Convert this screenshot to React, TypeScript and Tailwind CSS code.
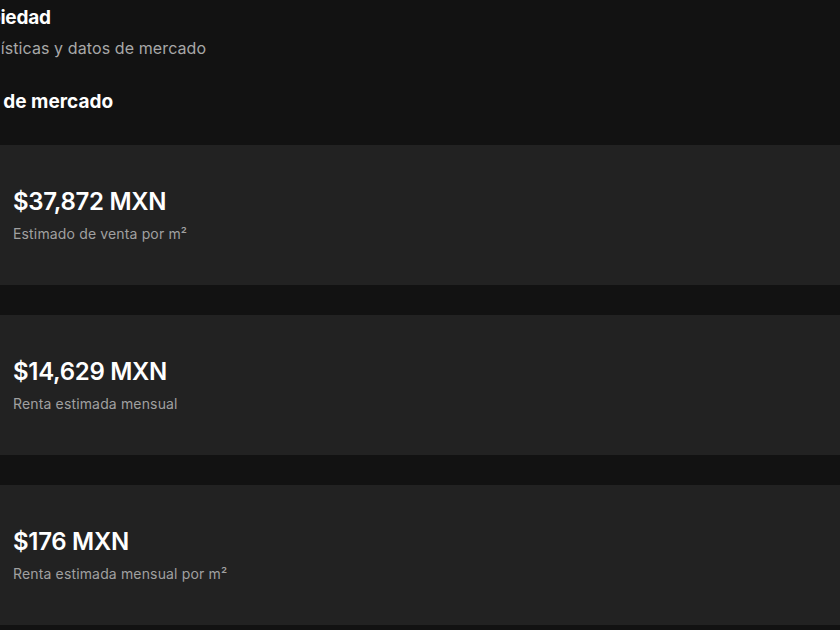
const stats = [
  { value: "$37,872 MXN", label: "Estimado de venta por m²" },
  { value: "$14,629 MXN", label: "Renta estimada mensual" },
  { value: "$176 MXN", label: "Renta estimada mensual por m²" },
];

export default function App() {
  return (
    <div className="min-h-screen bg-[#121212] overflow-hidden text-white font-['Inter',sans-serif]">
      {/* Section header (left side is cut off by the viewport) */}
      <div className="pt-[5px]">
        <h2 className="-ml-[42px] text-[19px] font-bold leading-[26px] tracking-[-0.2px]">Propiedad</h2>
        <p className="-ml-[42px] mt-[6px] text-[16px] leading-[22px] text-[#a8a8a8] tracking-[0.1px]">
          Estadísticas y datos de mercado
        </p>
        <h3 className="-ml-[55px] mt-[30px] text-[19px] font-bold leading-[26px] tracking-[0px]">Datos de mercado</h3>
      </div>

      {/* Stat cards */}
      <div className="mt-[30px] flex flex-col gap-[30px]">
        {stats.map((s, i) => (
          <div key={i} className="h-[140px] bg-[#222222] px-[13px] flex flex-col justify-center">
            <div className="text-[24px] font-semibold leading-[30px] tracking-[-0.3px]">{s.value}</div>
            <div className="mt-[8px] text-[14px] leading-[18px] text-[#a0a0a0] tracking-[0.15px]">{s.label}</div>
          </div>
        ))}
      </div>
    </div>
  );
}
